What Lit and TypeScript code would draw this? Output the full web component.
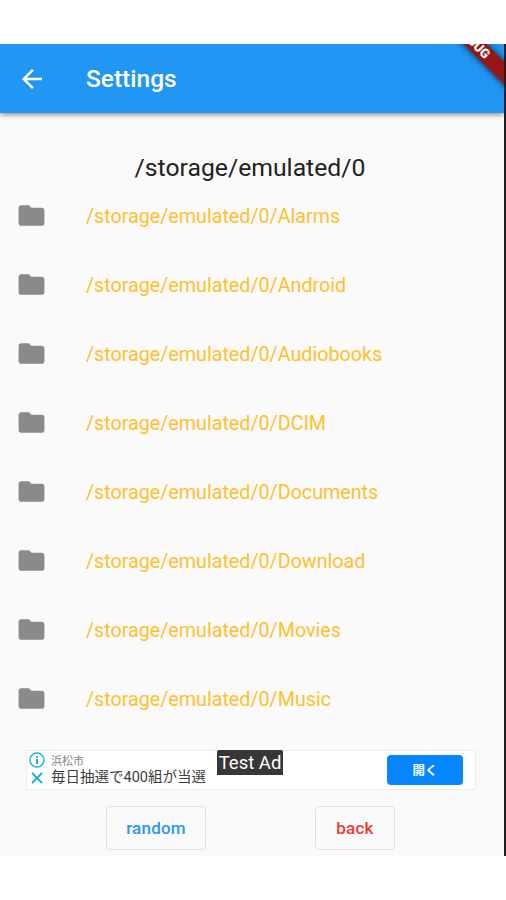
import { LitElement, html, css } from "lit";
import { customElement, property } from "lit/decorators.js";

@customElement("folder-row")
class FolderRow extends LitElement {
  @property() path = "";

  static styles = css`
    :host {
      display: flex;
      align-items: center;
      height: 69px;
      padding-left: 16px;
    }
    .icon {
      width: 31px;
      height: 31px;
      fill: #8a8a8a;
      flex: none;
    }
    .path {
      margin-left: 39px;
      padding-top: 2px;
      font-size: 19.7px;
      line-height: 24px;
      color: #ffc02e;
      white-space: nowrap;
    }
  `;

  render() {
    return html`
      <svg class="icon" viewBox="0 0 24 24">
        <path d="M10 4H4c-1.1 0-1.99.9-1.99 2L2 18c0 1.1.9 2 2 2h16c1.1 0 2-.9 2-2V8c0-1.1-.9-2-2-2h-8l-2-2z" />
      </svg>
      <span class="path">${this.path}</span>
    `;
  }
}

@customElement("ad-banner")
class AdBanner extends LitElement {
  static styles = css`
    :host {
      position: relative;
      display: flex;
      box-sizing: border-box;
      width: 450px;
      height: 40px;
      border: 1px solid #ebebeb;
      background: #fff;
      font-family: Roboto, "Noto Sans CJK JP", sans-serif;
    }
    .marks {
      display: flex;
      flex-direction: column;
      align-items: center;
      width: 19px;
      padding-top: 1px;
      gap: 2px;
    }
    .marks svg {
      width: 16px;
      height: 16px;
      fill: none;
      stroke: #1aaedb;
      stroke-width: 1.4;
    }
    .copy {
      display: flex;
      flex-direction: column;
      padding: 3px 0 0 5px;
      white-space: nowrap;
    }
    .place {
      font-size: 11px;
      line-height: 15px;
      color: #858585;
    }
    .headline {
      font-size: 14.5px;
      line-height: 18px;
      color: #3c3c3c;
    }
    .test {
      position: absolute;
      left: 190px;
      top: -1px;
      width: 66px;
      height: 25px;
      border-radius: 2px 2px 0 0;
      background: #373737;
      color: #fff;
      font-size: 18.5px;
      line-height: 26px;
      text-align: center;
      white-space: nowrap;
    }
    .open {
      margin: 4px 12px 0 auto;
      width: 76px;
      height: 30px;
      border-radius: 4px;
      background: #0586ff;
      color: #fff;
      font-size: 12.5px;
      font-weight: 700;
      line-height: 31px;
      text-align: center;
    }
  `;

  render() {
    return html`
      <div class="marks">
        <svg viewBox="0 0 16 16">
          <circle cx="8" cy="8" r="7" />
          <path d="M8 7v5M8 4v1.8" stroke-width="2" />
        </svg>
        <svg viewBox="0 0 16 16"><path d="M3 3l10 10M13 3L3 13" stroke-width="1.8" /></svg>
      </div>
      <div class="copy">
        <span class="place">浜松市</span>
        <span class="headline">毎日抽選で400組が当選</span>
      </div>
      <div class="test">Test Ad</div>
      <div class="open">開く</div>
    `;
  }
}

@customElement("app-root")
class AppRoot extends LitElement {
  static styles = css`
    :host {
      display: block;
      box-sizing: border-box;
      height: 900px;
      padding-top: 44px;
      background: #fff;
      font-family: Roboto, sans-serif;
    }
    .screen {
      position: relative;
      display: flex;
      flex-direction: column;
      box-sizing: border-box;
      height: 812px;
      overflow: hidden;
      border-right: 2px solid #1d1f22;
      background: #fafafa;
    }
    .bar {
      display: flex;
      align-items: center;
      flex: none;
      height: 69px;
      padding-left: 17px;
      background: #2196f3;
      box-shadow: 0 2px 5px rgba(0, 0, 0, 0.42);
      color: #fff;
    }
    .back-icon {
      width: 30px;
      height: 30px;
      fill: #fff;
    }
    .title {
      margin-left: 39px;
      padding-top: 1px;
      font-size: 24.5px;
      font-weight: 500;
      line-height: 30px;
    }
    .ribbon {
      position: absolute;
      left: 413px;
      top: -10px;
      width: 120px;
      height: 16px;
      transform: rotate(45deg);
      background: #961616;
      box-shadow: 0 0 7px rgba(0, 0, 0, 0.8);
      color: #fff;
      font-size: 13px;
      font-weight: 900;
      line-height: 16px;
      text-align: center;
    }
    .current {
      margin-top: 39px;
      height: 30px;
      font-size: 24.75px;
      line-height: 31px;
      text-align: center;
      color: #212121;
      padding-right: 4px;
      white-space: nowrap;
    }
    .list {
      display: flex;
      flex-direction: column;
      height: 552px;
      margin-top: -1px;
    }
    ad-banner {
      margin: 17px 0 0 26px;
    }
    .actions {
      display: flex;
      gap: 109px;
      margin: 16px 0 0 106px;
    }
    .action {
      box-sizing: border-box;
      height: 44px;
      border: 1px solid #dfdfdf;
      border-radius: 4px;
      padding: 0;
      background: transparent;
      font: 500 17px/42px Roboto, sans-serif;
      letter-spacing: 0.2px;
    }
    .random {
      width: 100px;
      color: #2c97f2;
    }
    .back {
      width: 80px;
      color: #f03a2e;
    }
  `;

  private folders = ["Alarms", "Android", "Audiobooks", "DCIM", "Documents", "Download", "Movies", "Music"];

  render() {
    return html`
      <div class="screen">
        <div class="bar">
          <svg class="back-icon" viewBox="0 0 24 24">
            <path d="M20 11H7.83l5.59-5.59L12 4l-8 8 8 8 1.41-1.41L7.83 13H20v-2z" />
          </svg>
          <span class="title">Settings</span>
        </div>
        <div class="ribbon">DEBUG</div>
        <div class="current">/storage/emulated/0</div>
        <div class="list">
          ${this.folders.map((name) => html`<folder-row path=${`/storage/emulated/0/${name}`}></folder-row>`)}
        </div>
        <ad-banner></ad-banner>
        <div class="actions">
          <button class="action random">random</button>
          <button class="action back">back</button>
        </div>
      </div>
    `;
  }
}
